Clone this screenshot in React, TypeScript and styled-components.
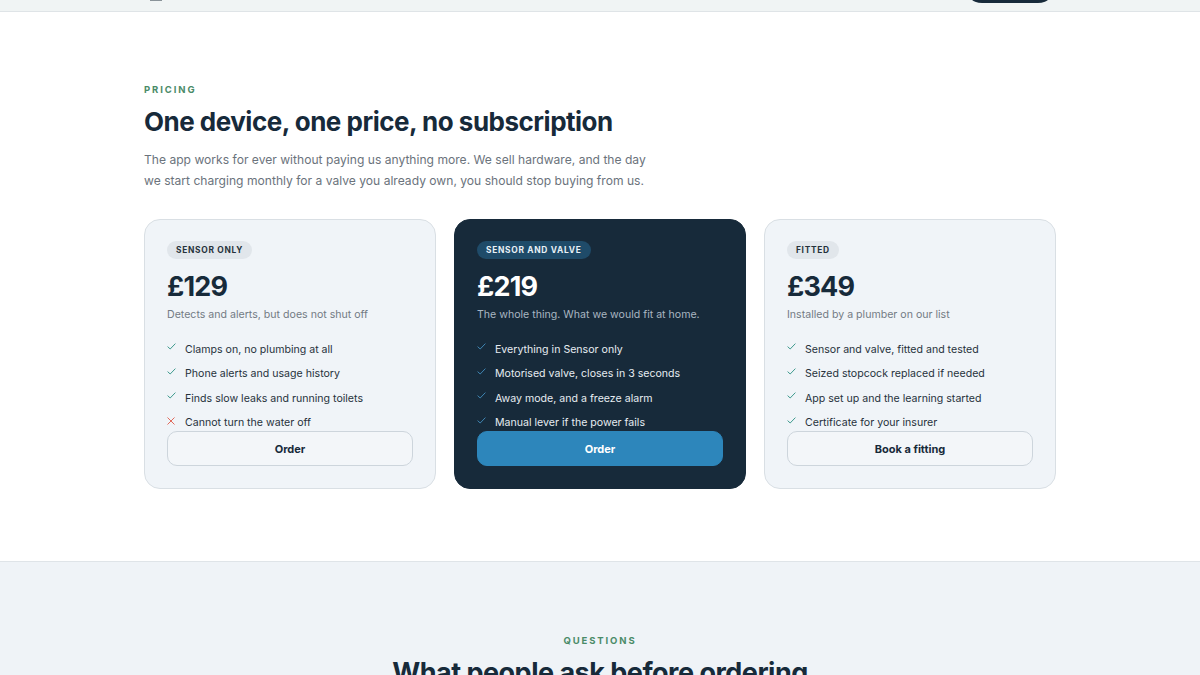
import React from "react";
import styled, { createGlobalStyle } from "styled-components";

type Plan = {
  tag: string;
  price: string;
  blurb: string;
  features: { text: string; ok: boolean }[];
  cta: string;
  featured?: boolean;
};

const plans: Plan[] = [
  {
    tag: "Sensor only",
    price: "£129",
    blurb: "Detects and alerts, but does not shut off",
    features: [
      { text: "Clamps on, no plumbing at all", ok: true },
      { text: "Phone alerts and usage history", ok: true },
      { text: "Finds slow leaks and running toilets", ok: true },
      { text: "Cannot turn the water off", ok: false },
    ],
    cta: "Order",
  },
  {
    tag: "Sensor and valve",
    price: "£219",
    blurb: "The whole thing. What we would fit at home.",
    features: [
      { text: "Everything in Sensor only", ok: true },
      { text: "Motorised valve, closes in 3 seconds", ok: true },
      { text: "Away mode, and a freeze alarm", ok: true },
      { text: "Manual lever if the power fails", ok: true },
    ],
    cta: "Order",
    featured: true,
  },
  {
    tag: "Fitted",
    price: "£349",
    blurb: "Installed by a plumber on our list",
    features: [
      { text: "Sensor and valve, fitted and tested", ok: true },
      { text: "Seized stopcock replaced if needed", ok: true },
      { text: "App set up and the learning started", ok: true },
      { text: "Certificate for your insurer", ok: true },
    ],
    cta: "Book a fitting",
  },
];

export default function App() {
  return (
    <>
      <Global />
      <Header>
        <HeaderInner>
          <LogoMark />
          <HeaderButton aria-label="Order now" />
        </HeaderInner>
      </Header>

      <Pricing>
        <Container>
          <Eyebrow>Pricing</Eyebrow>
          <Title>One device, one price, no subscription</Title>
          <Lead>
            The app works for ever without paying us anything more. We sell
            hardware, and the day we start charging monthly for a valve you
            already own, you should stop buying from us.
          </Lead>

          <Cards>
            {plans.map((p) => (
              <Card key={p.tag} $dark={p.featured}>
                <Badge $dark={p.featured}>{p.tag}</Badge>
                <Price $dark={p.featured}>{p.price}</Price>
                <Blurb $dark={p.featured}>{p.blurb}</Blurb>
                <Features>
                  {p.features.map((f) => (
                    <Feature key={f.text} $dark={p.featured}>
                      <Mark>
                        {f.ok ? (
                          <svg width="9" height="7" viewBox="0 0 9 7">
                            <path
                              d="M0.6 3.6 L3.2 6 L8.4 0.6"
                              fill="none"
                              stroke={p.featured ? "#3f86b3" : "#3f9a8e"}
                              strokeWidth="1"
                            />
                          </svg>
                        ) : (
                          <svg width="8" height="8" viewBox="0 0 8 8">
                            <path
                              d="M0.5 0.5 L7.5 7.5 M7.5 0.5 L0.5 7.5"
                              fill="none"
                              stroke="#e06a5c"
                              strokeWidth="1"
                            />
                          </svg>
                        )}
                      </Mark>
                      {f.text}
                    </Feature>
                  ))}
                </Features>
                <CardButton $primary={p.featured}>{p.cta}</CardButton>
              </Card>
            ))}
          </Cards>
        </Container>
      </Pricing>

      <Questions>
        <Eyebrow $center>Questions</Eyebrow>
        <Title $center $size={27}>
          What people ask before ordering
        </Title>
      </Questions>
    </>
  );
}

const Global = createGlobalStyle`
  html, body {
    margin: 0;
    padding: 0;
    background: #ffffff;
    font-family: Inter, "Liberation Sans", sans-serif;
    color: #172a3a;
    overflow: hidden;
  }
  * { box-sizing: border-box; }
`;

const Header = styled.header`
  height: 12px;
  overflow: hidden;
  background: #f0f4f4;
  border-bottom: 1px solid #dfe4e7;
`;

const HeaderInner = styled.div`
  width: 912px;
  margin: -33px auto 0;
  height: 36px;
  display: flex;
  align-items: center;
  justify-content: space-between;
`;

const LogoMark = styled.span`
  display: block;
  width: 12px;
  height: 34px;
  margin-left: 6px;
  align-self: flex-start;
  border-bottom: 2px solid #8a9399;
`;

const HeaderButton = styled.button`
  width: 92px;
  height: 36px;
  border: none;
  border-radius: 999px;
  background: #172a3a;
`;

const Pricing = styled.section`
  padding: 72px 0 72px;
  background: #ffffff;
  border-bottom: 1px solid #dfe4e8;
`;

const Container = styled.div`
  width: 912px;
  margin: 0 auto;
`;

const Eyebrow = styled.div<{ $center?: boolean }>`
  font-size: 9.5px;
  line-height: 12px;
  font-weight: 700;
  letter-spacing: 1.9px;
  text-transform: uppercase;
  color: #4a8b68;
  text-align: ${(p) => (p.$center ? "center" : "left")};
`;

const Title = styled.h2<{ $center?: boolean; $size?: number }>`
  margin: 10px 0 0;
  font-size: ${(p) => p.$size ?? 26}px;
  line-height: 32px;
  font-weight: 700;
  letter-spacing: -0.5px;
  color: #172a3a;
  text-align: ${(p) => (p.$center ? "center" : "left")};
`;

const Lead = styled.p`
  margin: 11px 0 0;
  width: 520px;
  font-size: 12.1px;
  line-height: 21px;
  color: #6b737c;
`;

const Cards = styled.div`
  margin-top: 28px;
  display: grid;
  grid-template-columns: repeat(3, 1fr);
  gap: 18px;
`;

const Card = styled.div<{ $dark?: boolean }>`
  display: flex;
  flex-direction: column;
  align-items: flex-start;
  padding: 21px 22px 22px;
  border-radius: 16px;
  background: ${(p) => (p.$dark ? "#172a3a" : "#f0f4f8")};
  border: 1px solid ${(p) => (p.$dark ? "#172a3a" : "#d9dfe4")};
`;

const Badge = styled.span<{ $dark?: boolean }>`
  height: 18px;
  padding: 0 9px;
  display: inline-flex;
  align-items: center;
  border-radius: 999px;
  font-size: 8.4px;
  font-weight: 700;
  letter-spacing: 0.7px;
  text-transform: uppercase;
  background: ${(p) => (p.$dark ? "#1f4b69" : "#e1e6eb")};
  color: ${(p) => (p.$dark ? "#e8f0f6" : "#26323c")};
`;

const Price = styled.div<{ $dark?: boolean }>`
  margin-top: 12px;
  font-size: 27px;
  line-height: 31px;
  font-weight: 700;
  letter-spacing: -0.8px;
  color: ${(p) => (p.$dark ? "#ffffff" : "#172a3a")};
`;

const Blurb = styled.div<{ $dark?: boolean }>`
  margin-top: 6px;
  font-size: 10.6px;
  line-height: 14px;
  color: ${(p) => (p.$dark ? "#a9b6c1" : "#737b84")};
`;

const Features = styled.ul`
  list-style: none;
  margin: 15px 0 0;
  padding: 0;
  width: 100%;
`;

const Feature = styled.li<{ $dark?: boolean }>`
  display: flex;
  align-items: center;
  height: 24.5px;
  font-size: 10.6px;
  color: ${(p) => (p.$dark ? "#e6ecf1" : "#27323c")};
`;

const Mark = styled.span`
  width: 18px;
  flex: none;
  display: flex;
  align-self: flex-start;
  padding-top: 6px;
`;

const CardButton = styled.button<{ $primary?: boolean }>`
  margin-top: -4px;
  width: 100%;
  height: 35px;
  border-radius: 10px;
  font: 700 11px Inter, sans-serif;
  cursor: pointer;
  background: ${(p) => (p.$primary ? "#2d86bb" : "#f3f6f9")};
  color: ${(p) => (p.$primary ? "#ffffff" : "#172a3a")};
  border: 1px solid ${(p) => (p.$primary ? "#2d86bb" : "#cdd5dc")};
`;

const Questions = styled.section`
  padding-top: 73px;
  height: 200px;
  background: #eff3f7;
`;
